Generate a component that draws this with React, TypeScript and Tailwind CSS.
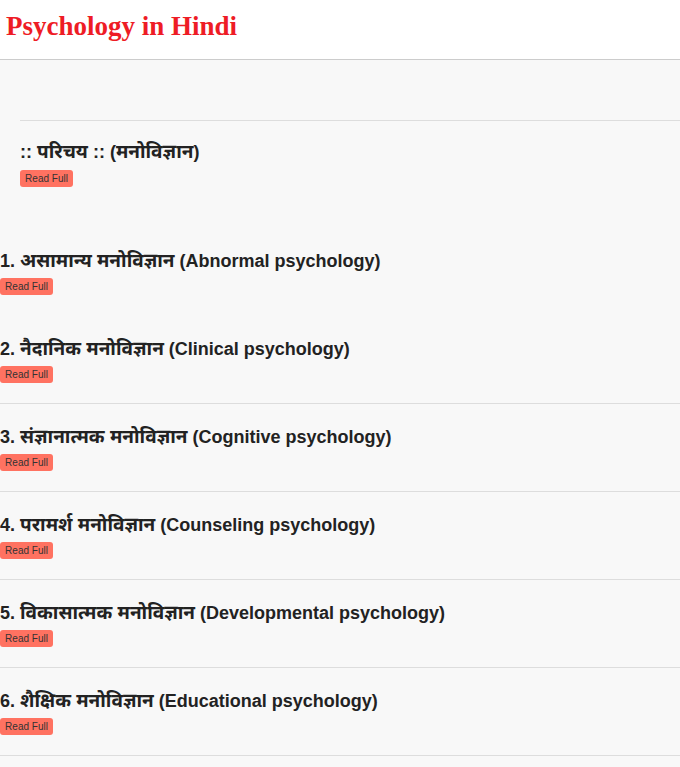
import React from "react";

const items: [string, string, string][] = [
  ["1. ", "असामान्य मनोविज्ञान", " (Abnormal psychology)"],
  ["2. ", "नैदानिक मनोविज्ञान", " (Clinical psychology)"],
  ["3. ", "संज्ञानात्मक मनोविज्ञान", " (Cognitive psychology)"],
  ["4. ", "परामर्श मनोविज्ञान", " (Counseling psychology)"],
  ["5. ", "विकासात्मक मनोविज्ञान", " (Developmental psychology)"],
  ["6. ", "शैक्षिक मनोविज्ञान", " (Educational psychology)"],
];

function ReadFull() {
  return (
    <button className="block h-[17px] w-[53px] rounded-[3px] bg-[#ff7261] text-[10px] leading-[17px] text-[#333] font-['Liberation_Sans',Arial,sans-serif]">
      Read Full
    </button>
  );
}

export default function App() {
  return (
    <div className="min-h-[767px] bg-[#f8f8f8] font-['Liberation_Sans','Noto_Sans',sans-serif]">
      <header className="h-[60px] border-b border-[#cccccc] bg-white pl-[6px]">
        <h1 className="pt-[11px] text-[27px] font-bold leading-[30px] text-[#ee1c25] font-['Liberation_Serif','Times_New_Roman',serif]">
          Psychology in Hindi
        </h1>
      </header>
      <div className="pt-[60px]">
        <section className="ml-[20px] border-t border-[#dddddd] pt-[21px]">
          <h2 className="text-[18px] font-bold leading-[20px] text-[#222]">
            :: <span className="text-[19px]">परिचय</span> :: (<span className="text-[19px]">मनोविज्ञान</span>)
          </h2>
          <div className="mt-[8px]">
            <ReadFull />
          </div>
        </section>
        <div className="pt-[41px]">
          {items.map(([n, h, e], i) => (
            <div
              key={n}
              className={
                i === 0
                  ? "border-b border-transparent pt-[23px] pb-[20px]"
                  : "border-b border-[#dddddd] pt-[23px] pb-[20px]"
              }
            >
              <h3 className="h-[20px] text-[18px] font-bold leading-[20px] text-[#222]">
                {n}
                <span className="text-[19px]">{h}</span>
                {e}
              </h3>
              <div className="mt-[7px]">
                <ReadFull />
              </div>
            </div>
          ))}
        </div>
      </div>
    </div>
  );
}
